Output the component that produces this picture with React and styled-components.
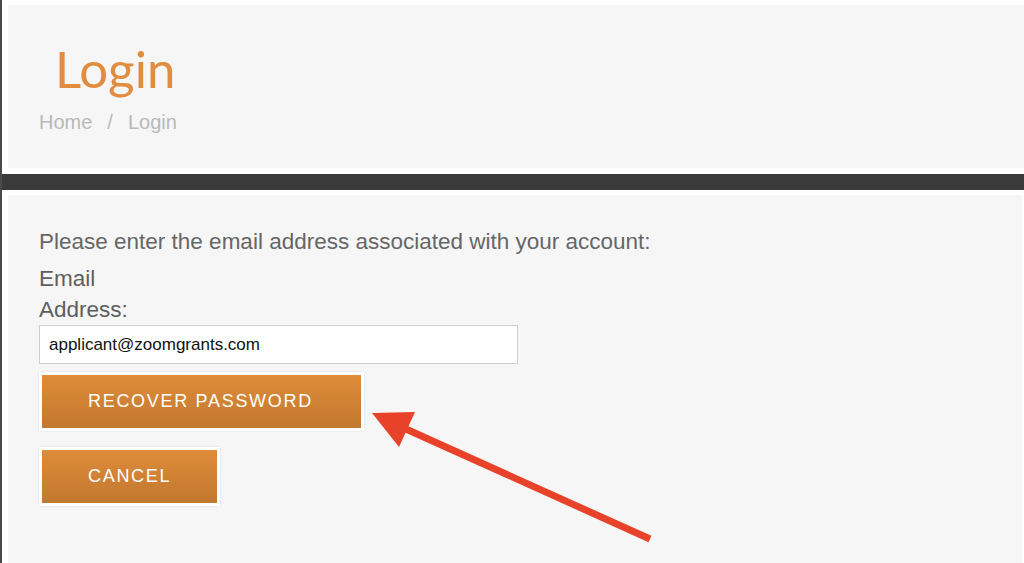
import React from 'react';
import styled, { createGlobalStyle } from 'styled-components';

const GlobalStyle = createGlobalStyle`
  html, body {
    margin: 0;
    padding: 0;
    background: #ffffff;
  }
  body {
    font-family: "Liberation Sans", Arial, sans-serif;
    overflow: hidden;
  }
`;

const Page = styled.div`
  position: relative;
  height: 563px;
  border-left: 2px solid #4a4a4a;
  display: flex;
  flex-direction: column;
  box-sizing: border-box;
`;

const Header = styled.header`
  margin: 5px 0 0 6px;
  height: 163px;
  background: #f6f6f6;
  padding: 33px 0 0 31px;
  box-sizing: border-box;
`;

const Title = styled.h1`
  margin: 0 0 0 16px;
  font-family: Lato, "Open Sans", sans-serif;
  font-weight: 400;
  font-size: 51px;
  line-height: 61px;
  color: #e28c3e;
`;

const Crumbs = styled.nav`
  margin-top: 12px;
  display: flex;
  gap: 15px;
  font-size: 20px;
  line-height: 23px;
  color: #b9b9b9;
`;

const DarkBand = styled.div`
  margin-top: 6px;
  height: 16px;
  background: #3b3b3b;
`;

const Content = styled.main`
  flex: 1;
  margin: 5px 2px 0 6px;
  background: #f6f6f6;
  padding: 34px 31px 0;
  box-sizing: border-box;
`;

const Intro = styled.p`
  margin: 0;
  font-size: 22.5px;
  line-height: 26px;
  color: #666666;
`;

const Label = styled.label`
  display: block;
  width: 100px;
  margin-top: 8px;
  font-size: 22.5px;
  line-height: 31px;
  color: #5e5e5e;
`;

const Input = styled.input`
  display: block;
  width: 479px;
  height: 39px;
  box-sizing: border-box;
  border: 1px solid #cfcfcf;
  background: #ffffff;
  padding: 0 9px;
  font-family: "Liberation Sans", Arial, sans-serif;
  font-size: 17px;
  color: #111111;
  outline: none;
`;

const Button = styled.button`
  display: block;
  width: ${({ $w }) => $w}px;
  height: 59px;
  margin-top: ${({ $top }) => $top}px;
  box-sizing: border-box;
  border: 3px solid #ffffff;
  box-shadow: 0 0 2px rgba(0, 0, 0, 0.12);
  background: linear-gradient(#de8c39, #c27830);
  color: #ffffff;
  font-family: "Liberation Sans", Arial, sans-serif;
  font-size: 18px;
  letter-spacing: 1.7px;
  text-align: left;
  padding: 0 0 0 46px;
  cursor: pointer;
`;

const Arrow = styled.svg`
  position: absolute;
  left: 0;
  top: 0;
  pointer-events: none;
`;

export default function App() {
  return (
    <>
      <GlobalStyle />
      <Page>
        <Header>
          <Title>Login</Title>
          <Crumbs>
            <span>Home</span>
            <span>/</span>
            <span>Login</span>
          </Crumbs>
        </Header>
        <DarkBand />
        <Content>
          <Intro>Please enter the email address associated with your account:</Intro>
          <Label htmlFor="email">Email Address:</Label>
          <Input id="email" defaultValue="applicant@zoomgrants.com" />
          <Button $w={325} $top={8}>RECOVER PASSWORD</Button>
          <Button $w={181} $top={16}>CANCEL</Button>
        </Content>
        <Arrow width="1024" height="563" viewBox="0 0 1024 563">
          <line x1="648" y1="539" x2="395" y2="425" stroke="#e8432a" strokeWidth="7" />
          <polygon points="370,413 413,412 397,447" fill="#e8432a" />
        </Arrow>
      </Page>
    </>
  );
}
